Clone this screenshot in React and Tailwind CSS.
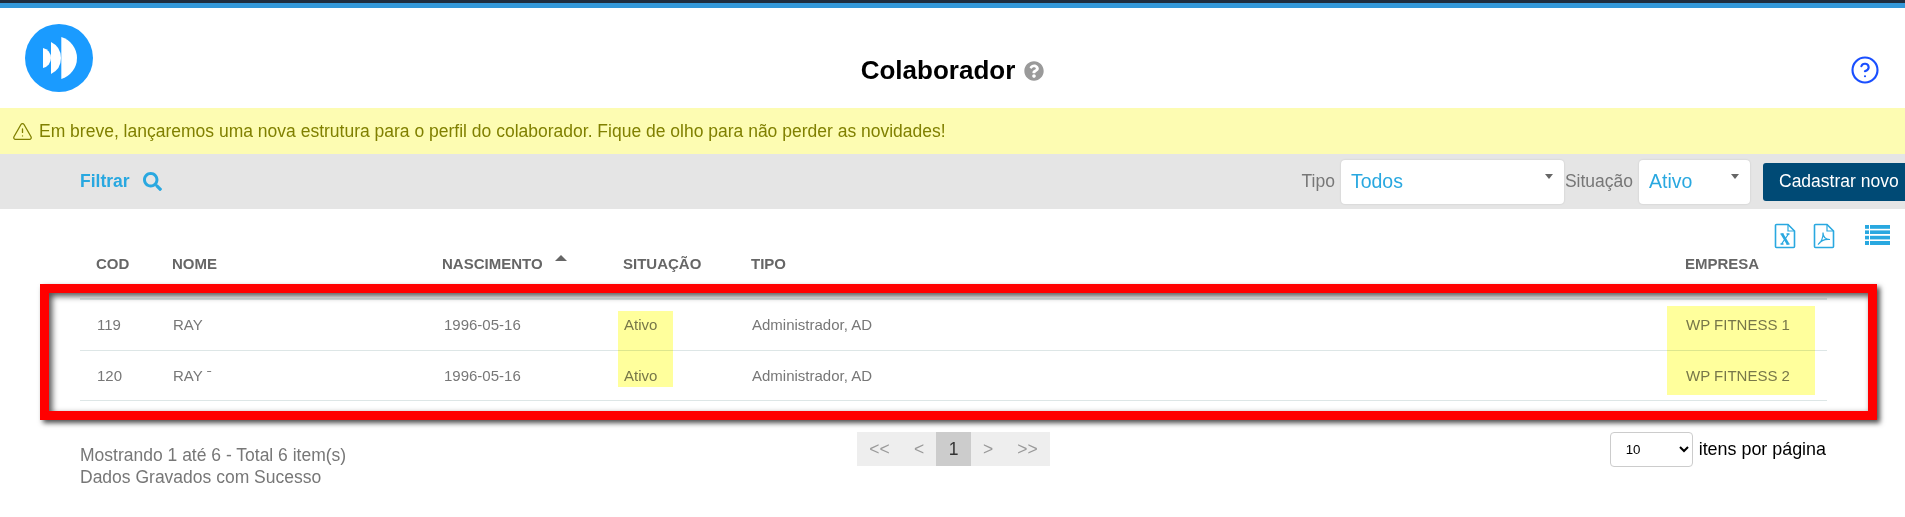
import { CircleHelp, TriangleAlert } from "lucide-react";
import { FaQuestionCircle, FaSearch } from "react-icons/fa";

const rows = [
  { cod: "119", nome: "RAY", nascimento: "1996-05-16", situacao: "Ativo", tipo: "Administrador, AD", empresa: "WP FITNESS 1", altura: "h-[51px]" },
  { cod: "120", nome: "RAY ˉ", nascimento: "1996-05-16", situacao: "Ativo", tipo: "Administrador, AD", empresa: "WP FITNESS 2", altura: "h-[50px] pt-[2px]" },
];

function Logo() {
  return (
    <svg width="68" height="68" viewBox="0 0 68 68">
      <circle cx="34" cy="34" r="34" fill="#1a9bff" />
      <path d="M18 24 A10.25 10.25 0 0 1 18 44 Z" fill="#fff" />
      <path d="M26 18 A17.8 17.8 0 0 1 26 50 Z" fill="#fff" />
      <path d="M36.3 13 A21.9 21.9 0 0 1 36.3 55 Z" fill="#fff" />
    </svg>
  );
}

function FileIcon({ children }) {
  return (
    <svg width="22" height="26" viewBox="0 0 22 26" fill="none" stroke="#29a8e0">
      <path d="M1.5 2.5 a1 1 0 0 1 1 -1 H14 L20.5 8 V23.5 a1 1 0 0 1 -1 1 H2.5 a1 1 0 0 1 -1 -1 Z" strokeWidth="1.6" />
      <path d="M14 1.5 V8 H20.5" strokeWidth="1.2" />
      {children}
    </svg>
  );
}

function Dropdown({ value, width }) {
  return (
    <div className={`flex h-[44px] justify-between rounded bg-white pl-[10px] pr-[11px] shadow-[0_0_2px_rgba(0,0,0,0.15)] ${width}`}>
      <span className="self-center text-[19.5px] text-[#29a8e0]">{value}</span>
      <span className="mt-[14px] h-0 w-0 border-x-[4.5px] border-t-[5px] border-x-transparent border-t-[#666]" />
    </div>
  );
}

export default function App() {
  return (
    <div className="h-[517px] w-full overflow-hidden bg-white font-['Liberation_Sans',Arial,sans-serif]">
      <div className="h-[3px] bg-[#1f2d3d]" />
      <div className="h-[5px] bg-[#3498d8]" />

      <header className="grid h-[100px] grid-cols-[1fr_auto_1fr] items-start pl-[25px] pr-[25px]">
        <div className="mt-[16px]">
          <Logo />
        </div>
        <div className="mt-[46px] flex items-center gap-[9px]">
          <h1 className="text-[26px] font-bold leading-[32px] text-black">Colaborador</h1>
          <FaQuestionCircle className="mt-[1px] text-[#9a9a9a]" size={20} />
        </div>
        <div className="mt-[47px] flex justify-end">
          <CircleHelp size={30} strokeWidth={1.7} className="text-[#1a4fff]" />
        </div>
      </header>

      <div className="flex h-[46px] items-center gap-[6px] bg-[#fdfcb2] pl-[12px] text-[17.5px] text-[#808000]">
        <TriangleAlert size={21} strokeWidth={1.5} />
        <span>Em breve, lançaremos uma nova estrutura para o perfil do colaborador. Fique de olho para não perder as novidades!</span>
      </div>

      <div className="flex h-[55px] items-center justify-between bg-[#e5e5e5] pl-[80px]">
        <div className="flex items-center gap-[13px] text-[#29a8e0]">
          <span className="text-[17.5px] font-bold">Filtrar</span>
          <FaSearch size={19} />
        </div>
        <div className="flex items-center text-[17.5px] text-[#777]">
          <span className="mr-[6px]">Tipo</span>
          <Dropdown value="Todos" width="w-[223px]" />
          <span className="ml-[1px] mr-[6px]">Situação</span>
          <Dropdown value="Ativo" width="w-[111px]" />
          <button className="ml-[13px] mr-[-10px] h-[38px] w-[152px] shrink-0 rounded-[3px] bg-[#004a75] pl-[16px] text-left text-[17.5px] text-white">
            Cadastrar novo
          </button>
        </div>
      </div>

      <div className="flex h-[43px] items-start justify-end pr-[15px] pt-[14px]">
        <FileIcon>
          <path d="M6.5 11 H9.5 M12.5 11 H15.5 M6.5 21 H9.5 M12.5 21 H15.5 M14.5 11 L7.5 21" strokeWidth="1.3" />
          <path d="M8 11 L14 21" strokeWidth="2.6" />
        </FileIcon>
        <div className="ml-[17px]">
          <FileIcon>
            <path d="M5 21.5 C8 20 10.5 14 10 9.5 C10 14 12.5 16.5 17 16.5 C13 16 8 17.5 5 21.5 Z" strokeWidth="1.2" />
          </FileIcon>
        </div>
        <svg className="ml-[30px] mt-[2px]" width="25" height="20" viewBox="0 0 25 20" fill="#29a8e0">
          <rect x="0" y="0" width="4" height="3.8" />
          <rect x="5" y="0" width="20" height="3.8" />
          <rect x="0" y="5.4" width="4" height="3.6" />
          <rect x="5" y="5.4" width="20" height="3.6" />
          <rect x="0" y="10.8" width="4" height="3.6" />
          <rect x="5" y="10.8" width="20" height="3.6" />
          <rect x="0" y="16" width="4" height="4" />
          <rect x="5" y="16" width="20" height="4" />
        </svg>
      </div>

      <div className="relative mx-[78px] ml-[80px]">
        <div className="grid h-[48px] grid-cols-[76px_270px_181px_128px_934px_1fr] items-start border-b-2 border-[#dde6e6] pl-[16px] pt-[1px] text-[15px] font-bold text-[#666]">
          <span>COD</span>
          <span>NOME</span>
          <span className="flex items-start gap-[12px]">
            NASCIMENTO
            <span className="mt-[2px] h-0 w-0 border-x-[6px] border-b-[6px] border-x-transparent border-b-[#666]" />
          </span>
          <span>SITUAÇÃO</span>
          <span>TIPO</span>
          <span>EMPRESA</span>
        </div>
        {rows.map((row) => (
          <div
            key={row.cod}
            className={`grid grid-cols-[76px_270px_181px_128px_934px_1fr] items-center border-b border-[#dde6e6] pl-[17px] text-[15px] text-[#777] ${row.altura}`}
          >
            <span>{row.cod}</span>
            <span>{row.nome}</span>
            <span className="pl-[1px]">{row.nascimento}</span>
            <span>{row.situacao}</span>
            <span>{row.tipo}</span>
            <span>{row.empresa}</span>
          </div>
        ))}

        {/* marcacoes por cima da tabela */}
        <div className="absolute left-[538px] top-[59px] h-[76px] w-[55px] bg-[#ffff9c] mix-blend-multiply" />
        <div className="absolute left-[1587px] top-[54px] h-[89px] w-[148px] bg-[#ffff9c] mix-blend-multiply" />
        <div className="absolute left-[-40px] top-[32px] h-[136px] w-[1837px] border-[9px] border-[#ff0000] shadow-[3px_3px_5px_rgba(0,0,0,0.7),inset_3px_3px_6px_rgba(0,0,0,0.7)]" />
      </div>

      <div className="mt-[31px] flex items-start pl-[80px] pr-[79px]">
        <div className="w-[777px] text-[17.5px] leading-[22px] text-[#777]">
          <p className="mt-[12px]">Mostrando 1 até 6 - Total 6 item(s)</p>
          <p>Dados Gravados com Sucesso</p>
        </div>
        <div className="flex h-[34px] items-center bg-[#eeeeee] text-[17.5px] text-[#999]">
          <span className="w-[45px] text-center">&lt;&lt;</span>
          <span className="w-[34px] text-center">&lt;</span>
          <span className="flex h-full w-[35px] items-center justify-center bg-[#cccccc] text-[#333]">1</span>
          <span className="w-[34px] text-center">&gt;</span>
          <span className="w-[45px] text-center">&gt;&gt;</span>
        </div>
        <div className="ml-auto flex items-center gap-[6px] text-[17.9px] text-black">
          <select defaultValue="10" className="h-[35px] w-[83px] rounded-[4px] border border-[#ccc] pl-[11px] text-[13.33px]">
            <option value="10">10</option>
          </select>
          <span>itens por página</span>
        </div>
      </div>
    </div>
  );
}
